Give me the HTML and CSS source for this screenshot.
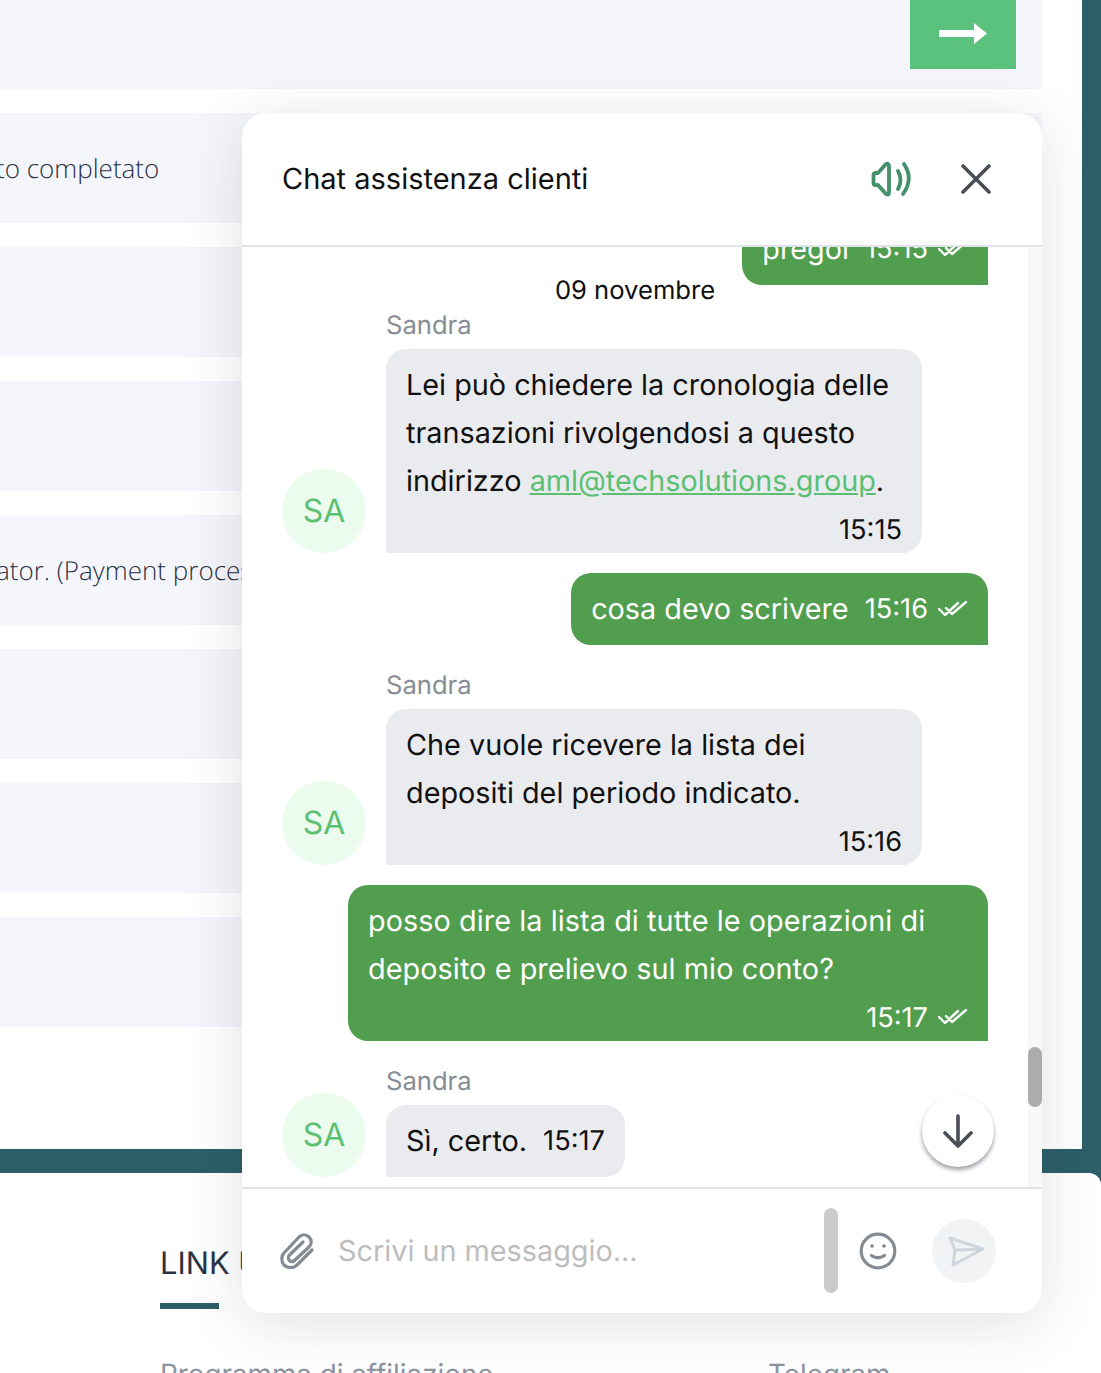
FILE: index.html
```html
<!DOCTYPE html>
<html lang="it">
<head>
    <meta charset="UTF-8">
    <title>Chat assistenza clienti</title>
    <link rel="stylesheet" href="styles.css">
</head>
<body>
    <div class="page">
        <div class="main">
            <div class="top-bar">
                <button class="next-btn">
                    <svg width="48" height="21" viewBox="0 0 48 21"><path d="M1 7q-1 0-1 1v5q0 1 1 1h34v7l13-10.500L35 0v7z" fill="#fff"/></svg>
                </button>
            </div>
            <div class="row">to completato</div>
            <div class="row"></div>
            <div class="row"></div>
            <div class="row">ator. (Payment processor)</div>
            <div class="row"></div>
            <div class="row"></div>
            <div class="row"></div>
        </div>

        <footer class="site-footer">
            <h3>LINK UTILI</h3>
            <div class="footer-links">
                <a>Programma di affiliazione</a>
                <a>Telegram</a>
            </div>
        </footer>

        <div class="chat">
            <div class="chat-header">
                <span class="chat-title">Chat assistenza clienti</span>
                <svg class="icon-sound" width="42" height="38" viewBox="0 0 42 38" fill="none" stroke="#43906a" stroke-width="3.800" stroke-linecap="round" stroke-linejoin="round">
                    <path d="M3.500 15v8q0 2 2 2H8l8 9q3 2 3-2V6q0-3-3-2l-8 9H5.500q-2 0-2 2z"/>
                    <path d="M28 11q5 9 0 18"/>
                    <path d="M34 4q10 15-1 30"/>
                </svg>
                <svg class="icon-close" width="30" height="30" viewBox="0 0 30 30" stroke="#4a4f57" stroke-width="3.600" stroke-linecap="round">
                    <path d="M2 2l26 26M28 2L2 28"/>
                </svg>
            </div>

            <div class="chat-body">
                <div class="messages">
                    <div class="msg-out">
                        <div class="bubble bubble-out inline">
                            <span>pregoi</span>
                            <span class="time">15:15</span>
                            <svg class="ticks" width="30" height="16" viewBox="0 0 30 16"><path d="M1 8l6 6L20 2M8 7l6 6L28 1"/></svg>
                        </div>
                    </div>
                    <div class="date">09 novembre</div>

                    <div class="msg-in first">
                        <div class="avatar">SA</div>
                        <div class="msg-content">
                            <div class="sender">Sandra</div>
                            <div class="bubble bubble-in">
                                Lei può chiedere la cronologia delle transazioni rivolgendosi a questo indirizzo <a class="mail">aml@techsolutions.group</a>.
                                <div class="meta"><span class="time">15:15</span></div>
                            </div>
                        </div>
                    </div>

                    <div class="msg-out">
                        <div class="bubble bubble-out inline">
                            <span>cosa devo scrivere</span>
                            <span class="time">15:16</span>
                            <svg class="ticks" width="30" height="16" viewBox="0 0 30 16"><path d="M1 8l6 6L20 2M8 7l6 6L28 1"/></svg>
                        </div>
                    </div>

                    <div class="msg-in">
                        <div class="avatar">SA</div>
                        <div class="msg-content">
                            <div class="sender">Sandra</div>
                            <div class="bubble bubble-in">
                                Che vuole ricevere la lista dei<br>depositi del periodo indicato.
                                <div class="meta"><span class="time">15:16</span></div>
                            </div>
                        </div>
                    </div>

                    <div class="msg-out">
                        <div class="bubble bubble-out wide">
                            posso dire la lista di tutte le operazioni di deposito e prelievo sul mio conto?
                            <div class="meta">
                                <span class="time">15:17</span>
                                <svg class="ticks" width="30" height="16" viewBox="0 0 30 16"><path d="M1 8l6 6L20 2M8 7l6 6L28 1"/></svg>
                            </div>
                        </div>
                    </div>

                    <div class="msg-in">
                        <div class="avatar">SA</div>
                        <div class="msg-content">
                            <div class="sender">Sandra</div>
                            <div class="bubble bubble-in inline">
                                <span>Sì, certo.</span>
                                <span class="time">15:17</span>
                            </div>
                        </div>
                    </div>
                </div>
                <div class="scrollbar"><div class="scroll-thumb"></div></div>
                <button class="scroll-down">
                    <svg width="32" height="34" viewBox="0 0 32 34" fill="none" stroke="#4a4f57" stroke-width="3.600" stroke-linecap="round" stroke-linejoin="round">
                        <path d="M16 2v30M3 19l13 13 13-13"/>
                    </svg>
                </button>
            </div>

            <div class="chat-footer">
                <svg class="icon-attach" width="36" height="36" viewBox="0 0 36 36" fill="none" stroke="#858b93" stroke-width="3.200" stroke-linecap="round" stroke-linejoin="round">
                    <path d="M32 17L17 32c-4 4-10 3-13 0-3-4-3-9 0-12L19 4c3-3 7-3 10 0 3 3 3 7 0 10L15 27c-2 2-4 2-5.500 .5-1.500-1.500-1.500-4 0-5.500L23 9"/>
                </svg>
                <span class="placeholder">Scrivi un messaggio...</span>
                <div class="input-scroll"></div>
                <svg class="icon-smile" width="38" height="38" viewBox="0 0 38 38" fill="none" stroke="#858b93" stroke-width="3.200" stroke-linecap="round">
                    <circle cx="19" cy="19" r="16.800"/>
                    <path d="M12.500 23.500q6.500 4.500 13 0"/>
                    <circle cx="13" cy="14" r="1.300" fill="#858b93" stroke-width="1"/>
                    <circle cx="25" cy="14" r="1.300" fill="#858b93" stroke-width="1"/>
                </svg>
                <button class="send-btn">
                    <svg width="40" height="32" viewBox="0 0 40 32" fill="none" stroke="#cfd5dd" stroke-width="3" stroke-linecap="round" stroke-linejoin="round">
                        <path d="M6 3l33 11L9 30l2-15zM11 15l28-1"/>
                    </svg>
                </button>
            </div>
        </div>
    </div>
</body>
</html>
```

FILE: styles.css
```css
html, body {
    margin: 0;
    padding: 0;
}
body {
    font-family: Inter, "Liberation Sans", sans-serif;
    text-rendering: geometricPrecision;
}
.page {
    position: relative;
    height: 1373px;
    overflow: hidden;
    background-color: #2c5f68;
}

/* Page behind the chat */
.main {
    height: 1149px;
    margin-right: 19px;
    padding-right: 40px;
    box-sizing: border-box;
    background-color: white;
    display: flex;
    flex-direction: column;
    gap: 24px;
}
.top-bar {
    height: 89px;
    padding-right: 26px;
    background-color: #f5f6fb;
    display: flex;
    justify-content: flex-end;
    align-items: flex-start;
}
.next-btn {
    width: 106px;
    height: 69px;
    padding: 0 0 2px;
    border: none;
    background-color: #5bc27e;
    display: flex;
    align-items: center;
    justify-content: center;
}
.row {
    height: 110px;
    line-height: 110px;
    background-color: #f5f6fb;
    font-family: "Open Sans", sans-serif;
    font-weight: 300;
    font-size: 26px;
    text-indent: -4px;
    color: #2b3245;
    white-space: nowrap;
    overflow: hidden;
}
.site-footer {
    height: 200px;
    margin-top: 24px;
    padding: 73px 0 0 160px;
    box-sizing: border-box;
    background-color: white;
    border-radius: 0 12px 0 0;
}
.site-footer h3 {
    margin: 0;
    font-size: 30.800px;
    line-height: 36px;
    font-weight: 400;
    color: #2b3245;
}
.site-footer h3::after {
    content: "";
    display: block;
    width: 59px;
    height: 6px;
    margin-top: 21px;
    background-color: #2c5f68;
}
.footer-links {
    display: flex;
    margin-top: 47px;
    font-size: 27.800px;
    line-height: 36px;
    color: #8c93a0;
}
.footer-links a {
    width: 608px;
    flex-shrink: 0;
}

/* Chat widget */
.chat {
    position: absolute;
    left: 242px;
    top: 113px;
    width: 800px;
    height: 1200px;
    background-color: white;
    border-radius: 24px;
    box-shadow: 0 10px 60px rgba(40, 45, 60, 0.14);
    display: flex;
    flex-direction: column;
    overflow: hidden;
}
.chat-header {
    height: 134px;
    flex-shrink: 0;
    box-sizing: border-box;
    padding: 0 51px 0 40px;
    border-bottom: 2px solid #e0e4ea;
    display: flex;
    align-items: center;
}
.chat-title {
    flex: 1;
    padding-bottom: 2px;
    font-size: 29px;
    color: #111;
}
.icon-close {
    margin-left: 49px;
}
.chat-body {
    flex: 1;
    min-height: 0;
    position: relative;
    display: flex;
}
.messages {
    flex: 1;
    min-width: 0;
    padding: 0 40px 10px 40px;
    display: flex;
    flex-direction: column;
    justify-content: flex-end;
    overflow: hidden;
}
.scrollbar {
    width: 14px;
    flex-shrink: 0;
    background-color: #f8f8f8;
    position: relative;
}
.scroll-thumb {
    position: absolute;
    top: 800px;
    width: 14px;
    height: 60px;
    border-radius: 7px;
    background-color: #acacac;
}
.scroll-down {
    position: absolute;
    left: 680px;
    top: 848px;
    width: 72px;
    height: 72px;
    padding: 0;
    border: none;
    border-radius: 50%;
    background-color: white;
    box-shadow: 0 3px 4px rgba(60, 65, 80, 0.5);
    display: flex;
    align-items: center;
    justify-content: center;
}
.date {
    margin-top: -9px;
    text-align: center;
    font-size: 25.600px;
    line-height: 30px;
    color: #111;
}
.msg-out {
    display: flex;
    justify-content: flex-end;
    margin-top: 20px;
}
.msg-out:first-child {
    margin-top: 0;
}
.msg-in {
    display: flex;
    align-items: flex-end;
    gap: 20px;
    margin-top: 27px;
}
.msg-in.first {
    margin-top: 6px;
}
.avatar {
    width: 84px;
    height: 84px;
    padding-bottom: 2px;
    box-sizing: border-box;
    flex-shrink: 0;
    border-radius: 50%;
    background-color: #ebfbee;
    color: #5cbf74;
    font-size: 32px;
    display: flex;
    align-items: center;
    justify-content: center;
}
.msg-content {
    display: flex;
    flex-direction: column;
    align-items: flex-start;
    max-width: 536px;
}
.sender {
    font-size: 25.600px;
    line-height: 28px;
    margin-bottom: 9px;
    color: #868c94;
}
.bubble {
    padding: 12px 20px;
    font-size: 28.800px;
    line-height: 48px;
    border-radius: 20px;
}
.bubble-in {
    width: 536px;
    box-sizing: border-box;
    background-color: #eaebef;
    color: #111;
    border-bottom-left-radius: 0;
}
.bubble-out {
    background-color: #519e4e;
    color: white;
    border-bottom-right-radius: 0;
}
.bubble-out.wide {
    width: 640px;
    box-sizing: border-box;
    letter-spacing: 0.07px;
}
.bubble.inline {
    width: auto;
    display: flex;
    align-items: center;
    gap: 16px;
}
.meta {
    display: flex;
    justify-content: flex-end;
    align-items: center;
    gap: 10px;
    margin-top: 12px;
    height: 24px;
}
.meta .time {
    padding-top: 2px;
}
.time {
    font-size: 27.200px;
    line-height: 24px;
    letter-spacing: 0;
}
.ticks {
    fill: none;
    stroke: white;
    stroke-width: 2.400;
    stroke-linecap: round;
    stroke-linejoin: round;
}
.inline .ticks {
    margin-left: -6px;
}
.mail {
    color: #5cbf74;
    text-decoration: underline;
}
.chat-footer {
    height: 126px;
    flex-shrink: 0;
    box-sizing: border-box;
    border-top: 2px solid #e0e4ea;
    padding: 0 46px 0 38px;
    display: flex;
    align-items: center;
    position: relative;
}
.placeholder {
    flex: 1;
    margin-left: 22px;
    padding-bottom: 2px;
    font-size: 28.800px;
    color: #bdbdbd;
}
.input-scroll {
    position: absolute;
    left: 582px;
    top: 19px;
    width: 14px;
    height: 85px;
    border-radius: 7px;
    background-color: #cbcbcb;
}
.send-btn {
    width: 64px;
    height: 64px;
    margin-left: 35px;
    padding: 0;
    border: none;
    border-radius: 50%;
    background-color: #f1f3f5;
    display: flex;
    align-items: center;
    justify-content: center;
}
```
